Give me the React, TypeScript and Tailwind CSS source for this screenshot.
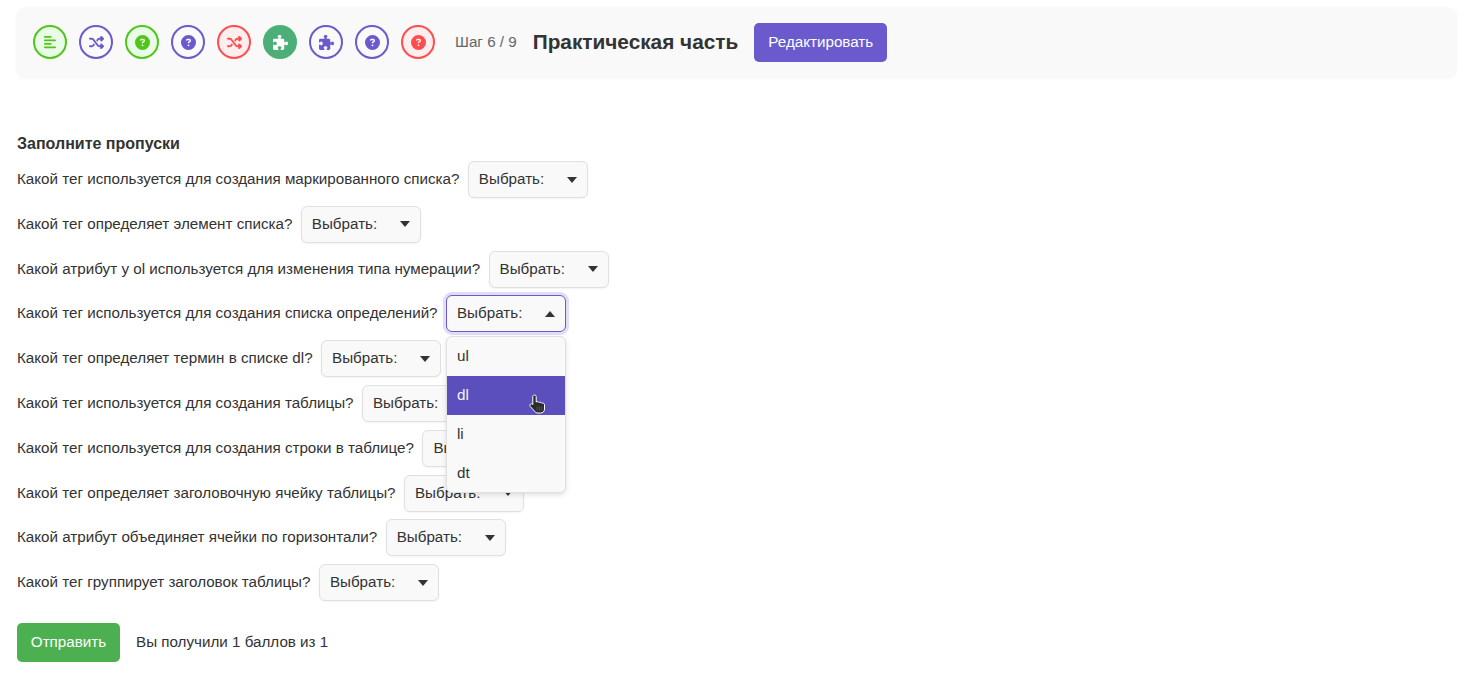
import { FaAlignLeft, FaShuffle, FaCircleQuestion, FaPuzzlePiece } from "react-icons/fa6";

const G = "border-[#52c41a] bg-[#e8fce8] text-[#52c41a]";
const P = "border-[#6a5acd] bg-[#fafafa] text-[#6a5acd]";
const R = "border-[#ff4d4f] bg-[#ffeeee] text-[#ff4d4f]";
const A = "border-[#4caf78] bg-[#4caf78] text-white";

const steps = [
  { I: FaAlignLeft, c: G, s: "h-[14px] w-[14px]" },
  { I: FaShuffle, c: P, s: "h-[15px] w-[15px]" },
  { I: FaCircleQuestion, c: G, s: "h-[15px] w-[15px]" },
  { I: FaCircleQuestion, c: P, s: "h-[15px] w-[15px]" },
  { I: FaShuffle, c: R, s: "h-[15px] w-[15px]" },
  { I: FaPuzzlePiece, c: A, s: "h-[15px] w-[15px]" },
  { I: FaPuzzlePiece, c: P, s: "h-[15px] w-[15px]" },
  { I: FaCircleQuestion, c: P, s: "h-[15px] w-[15px]" },
  { I: FaCircleQuestion, c: R, s: "h-[15px] w-[15px]" },
];

const questions = [
  "Какой тег используется для создания маркированного списка?",
  "Какой тег определяет элемент списка?",
  "Какой атрибут у ol используется для изменения типа нумерации?",
  "Какой тег используется для создания списка определений?",
  "Какой тег определяет термин в списке dl?",
  "Какой тег используется для создания таблицы?",
  "Какой тег используется для создания строки в таблице?",
  "Какой тег определяет заголовочную ячейку таблицы?",
  "Какой атрибут объединяет ячейки по горизонтали?",
  "Какой тег группирует заголовок таблицы?",
];

function Hand() {
  return (
    <svg width="18" height="20" viewBox="0 0 18 20" className="absolute left-[82px] top-[18px]">
      <path
        d="M5.500 1c1 0 1.700.7 1.700 1.700v5.300c.7-.5 2.300-.5 2.800.5.7-.5 2.300-.4 2.800.7.9-.4 2.700 0 2.700 1.600v4.200c0 2.500-1.600 4-4 4H8.800c-1.400 0-2.400-.6-3.200-1.700L1.300 12.500c-.7-.9-.5-1.900.2-2.400.8-.5 1.700-.3 2.200.4l.1.100V2.700C3.800 1.700 4.500 1 5.500 1z"
        fill="#2b2b2b"
        stroke="#ffffff"
        strokeWidth="1"
      />
      <path d="M8.200 12.500v4M10.500 12.500v4M12.800 12.500v4" stroke="#666666" strokeWidth=".7" />
    </svg>
  );
}

function Select({ open }: { open?: boolean }) {
  return (
    <div className="relative shrink-0">
      <div
        className={
          open
            ? "flex h-[37px] w-[120px] items-center justify-between rounded-[6px] border border-[#6a5acd] bg-[#f9f9f9] pl-[10px] pr-[10px] shadow-[0_0_0_3px_#e1ddf5]"
            : "flex h-[37px] w-[120px] items-center justify-between rounded-[6px] border border-[#e0e0e0] bg-[#f9f9f9] pl-[10px] pr-[10px] shadow-[0_1px_2px_rgba(0,0,0,0.05)]"
        }
      >
        <span className="text-[15.2px] text-[#333333]">Выбрать:</span>
        <span
          className={
            open
              ? "h-0 w-0 border-x-[5px] border-b-[6px] border-x-transparent border-b-[#333333]"
              : "h-0 w-0 border-x-[5px] border-t-[6px] border-x-transparent border-t-[#333333]"
          }
        />
      </div>
      {open && (
        <div className="absolute left-0 top-[41px] z-10 w-[120px] overflow-hidden rounded-[6px] border border-[#e0e0e0] bg-[#f9f9f9] shadow-[0_2px_5px_rgba(0,0,0,0.12)]">
          <div className="flex h-[39px] items-center pl-[10px] text-[15.2px] text-[#333333]">ul</div>
          <div className="relative flex h-[39px] items-center bg-[#5a4fbd] pl-[10px] text-[15.2px] text-[#f5f5ff]">
            dl
            <Hand />
          </div>
          <div className="flex h-[39px] items-center pl-[10px] text-[15.2px] text-[#333333]">li</div>
          <div className="flex h-[38px] items-center pl-[10px] text-[15.2px] text-[#333333]">dt</div>
        </div>
      )}
    </div>
  );
}

export default function App() {
  return (
    <div className="h-[674px] overflow-hidden bg-white px-4 pt-[7px] font-['Liberation_Sans',Arial,sans-serif] text-[#333333]">
      <header className="flex h-[72px] w-[1441px] items-center rounded-[10px] bg-[#f9f9f9] pb-[2px] pl-[17px] shadow-[0_0_3px_rgba(0,0,0,0.03)]">
        <div className="flex gap-3">
          {steps.map((s, i) => (
            <div key={i} className={"flex h-[34px] w-[34px] items-center justify-center rounded-full border-2 " + s.c}>
              <s.I className={s.s} />
            </div>
          ))}
        </div>
        <span className="ml-5 text-[15.2px] text-[#666666]">Шаг 6 / 9</span>
        <h1 className="ml-4 text-[20.8px] font-bold leading-none text-[#333333]">Практическая часть</h1>
        <button className="ml-4 h-[39px] w-[133px] rounded-[5px] bg-[#6a5acd] text-[15.2px] text-white">Редактировать</button>
      </header>
      <main className="pl-px">
        <h2 className="mt-[55px] text-base font-bold leading-[20px] text-[#333333]">Заполните пропуски</h2>
        <div className="mt-[7px] flex flex-col gap-[7.8px]">
          {questions.map((q, i) => (
            <div key={i} className="flex items-center gap-[8.4px]">
              <span className="text-[15.2px] text-[#333333]">{q}</span>
              <Select open={i === 3} />
            </div>
          ))}
        </div>
        <div className="mt-[22px] flex items-center gap-4">
          <button className="h-[39px] w-[103px] rounded-[5px] bg-[#4caf50] text-[15.2px] text-white">Отправить</button>
          <span className="text-[15.2px] text-[#333333]">Вы получили 1 баллов из 1</span>
        </div>
      </main>
    </div>
  );
}
